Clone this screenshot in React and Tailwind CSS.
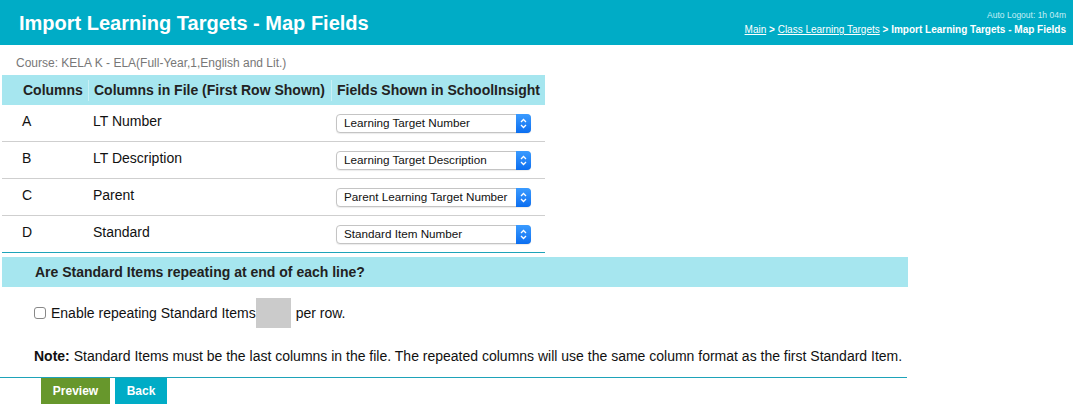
const rows = [
  { col: "A", name: "LT Number", field: "Learning Target Number" },
  { col: "B", name: "LT Description", field: "Learning Target Description" },
  { col: "C", name: "Parent", field: "Parent Learning Target Number" },
  { col: "D", name: "Standard", field: "Standard Item Number" },
];

function FakeSelect({ value }) {
  return (
    <div className="flex h-[19px] w-[195px] items-stretch rounded-[4px] border border-[#c4c4c4] bg-white shadow-[0_1px_1px_rgba(0,0,0,0.08)]">
      <div className="flex flex-1 items-center pl-[7px] text-[11.7px] text-[#111]">{value}</div>
      <div className="-my-px -mr-px flex w-[15px] items-center justify-center rounded-r-[4px] bg-gradient-to-b from-[#3a9bff] to-[#0a6ef0]">
        <svg width="7" height="11" viewBox="0 0 7 11" fill="none" stroke="white" strokeWidth="1.3">
          <path d="M1 4 L3.5 1.5 L6 4" />
          <path d="M1 7 L3.5 9.5 L6 7" />
        </svg>
      </div>
    </div>
  );
}

export default function App() {
  return (
    <div className="h-[415px] w-[1073px] bg-white font-['Liberation_Sans',Arial,sans-serif] text-[#111]">
      {/* Top bar */}
      <div className="flex h-[45px] items-center justify-between bg-[#00acc6] pl-[19px] pr-[7px]">
        <h1 className="text-[20px] font-bold text-white">Import Learning Targets - Map Fields</h1>
        <div className="flex flex-col items-end">
          <span className="text-[8.5px] leading-[10px] text-[#c6eef5]">Auto Logout: 1h 04m</span>
          <span className="mt-[4px] text-[10px] font-bold leading-[12px] text-white">
            <span className="underline font-normal">Main</span> &gt;{" "}
            <span className="underline font-normal">Class Learning Targets</span> &gt; Import Learning Targets - Map Fields
          </span>
        </div>
      </div>

      <div className="pl-[16px] pt-[11px] text-[12px] leading-[14px] text-[#777]">
        Course: KELA K - ELA(Full-Year,1,English and Lit.)
      </div>

      {/* Mapping table */}
      <div className="ml-[2px] mt-[5px] w-[543px]">
        <div className="grid h-[30px] grid-cols-[86px_243px_214px] items-center bg-[#a6e6ef] text-[14px] font-bold text-[#222]">
          <div className="pl-[21px]">Columns</div>
          <div className="border-l border-white/40 pl-[5px]">Columns in File (First Row Shown)</div>
          <div className="border-l border-white/40 pl-[5px] whitespace-nowrap">Fields Shown in SchoolInsight</div>
        </div>
        {rows.map((r, i) => (
          <div
            key={r.col}
            className={
              i === rows.length - 1
                ? "grid h-[37px] grid-cols-[86px_243px_214px] items-center border-b border-[#1ea3b9] text-[14px]"
                : "grid h-[37px] grid-cols-[86px_243px_214px] items-center border-b border-[#cfcfcf] text-[14px]"
            }
          >
            <div className="pl-[20px] pb-[4px]">{r.col}</div>
            <div className="pl-[5px] pb-[4px]">{r.name}</div>
            <div className="pl-[5px]">
              <FakeSelect value={r.field} />
            </div>
          </div>
        ))}
      </div>

      {/* Repeating standards */}
      <div className="ml-[2px] mt-[4px] flex h-[30px] w-[906px] items-center bg-[#a6e6ef] pl-[33px] text-[14px] font-bold text-[#222]">
        Are Standard Items repeating at end of each line?
      </div>

      <div className="mt-[11px] flex items-center pl-[34px] text-[14px]">
        <span className="mr-[5px] h-[12px] w-[12px] rounded-[3px] border border-[#888] bg-white" />
        <span>Enable repeating Standard Items</span>
        <span className="mr-[5px] h-[30px] w-[35px] bg-[#cbcbcb]" />
        <span>per row.</span>
      </div>

      <div className="mt-[18px] pl-[34px] text-[14px]">
        <span className="font-bold">Note:</span> Standard Items must be the last columns in the file. The repeated columns will use the same column format as the first Standard Item.
      </div>

      <div className="mt-[10px] flex w-[907px] gap-[5px] border-t border-[#1ea3b9] pl-[41px]">
        <button className="h-[26px] w-[69px] bg-[#67972c] text-[12px] font-bold text-white">Preview</button>
        <button className="h-[26px] w-[52px] bg-[#00acc6] text-[12px] font-bold text-white">Back</button>
      </div>
    </div>
  );
}
